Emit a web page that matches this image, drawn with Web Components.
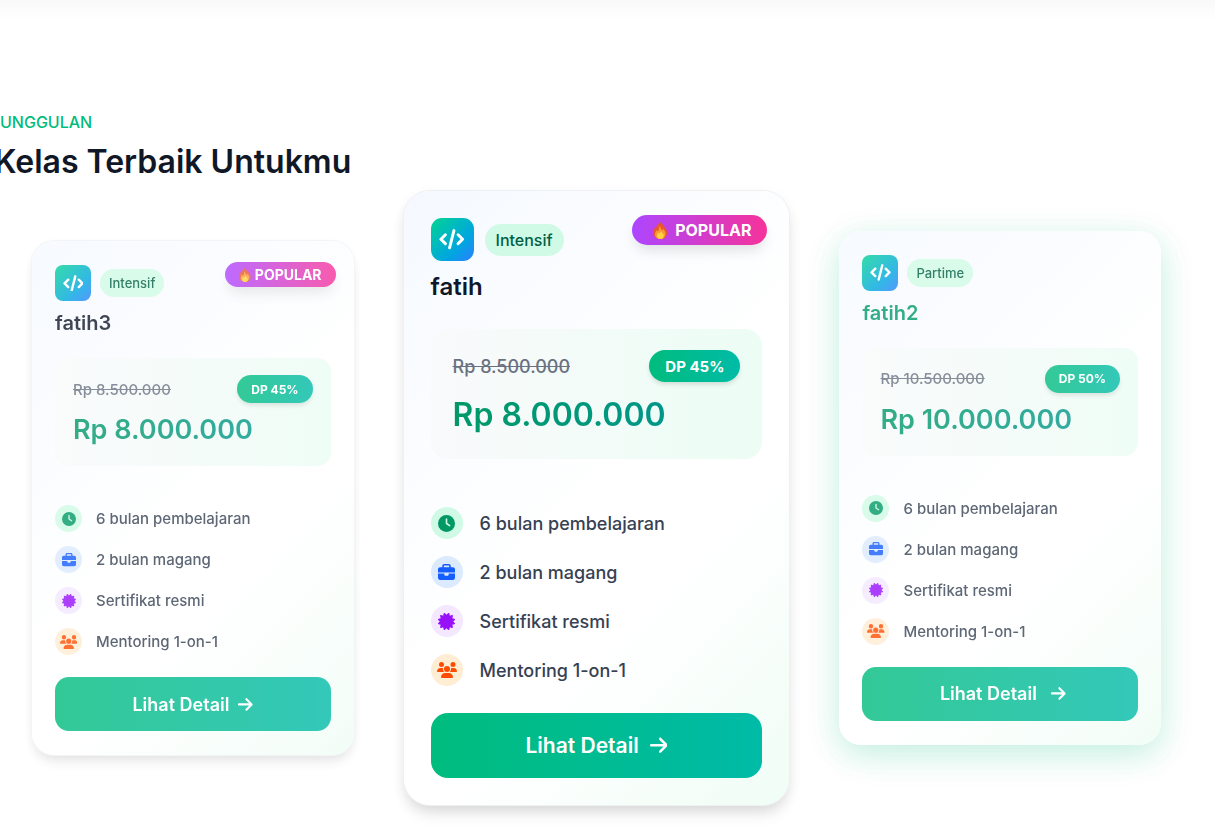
<!DOCTYPE html>
<html lang="id">
<head>
<meta charset="utf-8">
<meta name="viewport" content="width=device-width, initial-scale=1">
<title>Kelas Terbaik Untukmu</title>
<style>
  body { margin: 0; background: #fff; color: #101828; font-family: Inter, "Liberation Sans", sans-serif; overflow-x: hidden; }
</style>
</head>
<body>
<class-section>
  <span slot="eyebrow">UNGGULAN</span>
  <span slot="title">Kelas Terbaik Untukmu</span>
  <class-card popular muted>
    <span slot="type">Intensif</span>
    <span slot="name">fatih3</span>
    <s slot="old">Rp 8.500.000</s>
    <span slot="off">DP 45%</span>
    <span slot="price">Rp 8.000.000</span>
  </class-card>
  <class-card popular featured>
    <span slot="type">Intensif</span>
    <span slot="name">fatih</span>
    <s slot="old">Rp 8.500.000</s>
    <span slot="off">DP 45%</span>
    <span slot="price">Rp 8.000.000</span>
  </class-card>
  <class-card muted active>
    <span slot="type">Partime</span>
    <span slot="name">fatih2</span>
    <s slot="old">Rp 10.500.000</s>
    <span slot="off">DP 50%</span>
    <span slot="price">Rp 10.000.000</span>
  </class-card>
</class-section>

<template id="section-tpl">
  <style>
    :host { display: block; }
    .shade { height: 20px; background: linear-gradient(#f9f9f9, #fff); }
    header { padding-top: 90px; margin-left: -6px; white-space: nowrap; }
    p { margin: 0; padding-left: 6px; font-size: 16px; line-height: 24px; font-weight: 500; color: #00bc7d; }
    h2 { margin: 8px 0 9px; font-size: 32px; line-height: 40px; font-weight: 600; }
    .cards { display: grid; grid-template-columns: 5fr 6fr 5fr; column-gap: 50px; align-items: center; padding: 0 54px 26px 32px; }
  </style>
  <div class="shade"></div>
  <header>
    <p><slot name="eyebrow"></slot></p>
    <h2><slot name="title"></slot></h2>
  </header>
  <div class="cards"><slot></slot></div>
</template>

<template id="card-tpl">
  <style>
    :host {
      --pad: 24px 23px; --icon: 36px; --glyph: 14px; --team: 14px; --pill: 28px; --small: 13px; --off: 12px; --pop: 14px; --old: 15px; --name: 20px; --name-lh: 28px;
      --name-mt: 8px; --box-mt: 21px; --box-pad: 17px 18px 19px; --price: 27px; --price-lh: 34px; --price-mt: 10px;
      --list-mt: 39px; --dot: 27px; --row-gap: 14px; --text: 15px; --btn-mt: 22px; --btn: 54px; --btn-text: 18px;
      --radius: 14px; --gap: 9px; --badge-top: 21px; --badge-right: 18px; --badge: 25px; --chip-x: 9px; --off-x: 14px;
      display: block; position: relative; box-sizing: border-box; padding: var(--pad); border-radius: 22px;
      background: linear-gradient(135deg, #f5f9ff, #fff 50%, #fff 65%, #f0fdf6);
      box-shadow: 0 0 0 1px #f1f2f4, 0 9px 14px -3px #0000001c, 0 3px 14px -3px #00000018;
    }
    :host([featured]) {
      --pad: 27px; --icon: 43px; --glyph: 17px; --team: 16px; --pill: 32px; --small: 16px; --off: 15px; --pop: 16px; --old: 18px; --name: 24px; --name-lh: 32px;
      --name-mt: 10px; --box-mt: 26px; --box-pad: 21px 22px 24px; --price: 32px; --price-lh: 40px; --price-mt: 13px;
      --list-mt: 48px; --dot: 32px; --row-gap: 17px; --text: 18px; --btn-mt: 27px; --btn: 65px; --btn-text: 21px;
      --radius: 17px; --gap: 11px; --badge-top: 24px; --badge-right: 22px; --badge: 30px; --chip-x: 11px; --off-x: 16px;
      border-radius: 26px;
      box-shadow: 0 0 0 1px #eff0f2, 0 11px 16px -3px #0000001c, 0 4px 16px -3px #00000018;
    }
    :host([muted]) { opacity: .8; }
    :host([active]) {
      margin-bottom: 21px;
      box-shadow: 0 9px 34px #00bc7d50;
    }
    .head { display: flex; align-items: center; gap: var(--gap); }
    .logo { display: grid; place-items: center; width: var(--icon); height: var(--icon); border-radius: 8px; background: linear-gradient(135deg, #00d492, #00a6e0 65%, #2b7fff); }
    :host([featured]) .logo { border-radius: 11px; }
    .logo svg { height: calc(var(--glyph) * 1.2); }
    .chip, .off, .badge { display: flex; align-items: center; white-space: nowrap; border-radius: 99px; }
    .chip { height: var(--pill); padding: 0 var(--chip-x); box-sizing: border-box; background: #d0fae5; color: #006045; font-size: var(--small); font-weight: 500; }
    .badge {
      position: absolute; top: var(--badge-top); right: var(--badge-right); height: var(--badge); gap: 4px;
      padding: 0 var(--off-x); background: linear-gradient(90deg, #ad46ff, #f6339a); color: #fff;
      font-size: var(--pop); font-weight: 700; box-shadow: 0 8px 14px -3px #0000001f;
    }
    :host([featured]) .badge { padding-left: 21px; gap: 8px; }
    .badge svg { height: var(--glyph); }
    :host(:not([popular])) .badge { display: none; }
    h3 { margin: var(--name-mt) 0 0; font-size: var(--name); line-height: var(--name-lh); font-weight: 600; }
    :host([active]) h3 { color: #009966; }
    .box { margin-top: var(--box-mt); padding: var(--box-pad); border-radius: var(--radius); background: linear-gradient(90deg, #f9fafb, #ecfdf5); }
    .row { display: flex; justify-content: space-between; align-items: center; height: var(--pill); }
    .old { color: #6a7282; font-size: var(--old); font-weight: 500; }
    .off { height: var(--pill); padding: 0 var(--off-x); background: linear-gradient(90deg, #00bc7d, #00bba7); color: #fff; font-size: var(--off); font-weight: 700; box-shadow: 0 3px 5px -1px #00000026; }
    .price { width: fit-content; margin-top: var(--price-mt); font-size: var(--price); line-height: var(--price-lh); font-weight: 600; color: transparent; background: linear-gradient(90deg, #009966, #009689); background-clip: text; -webkit-background-clip: text; white-space: nowrap; }
    ul { list-style: none; margin: var(--list-mt) 0 0; padding: 0; display: grid; gap: var(--row-gap); color: #364153; font-size: var(--text); font-weight: 500; }
    li { display: flex; align-items: center; gap: var(--row-gap); height: var(--dot); white-space: nowrap; }
    i { display: grid; place-items: center; width: var(--dot); height: var(--dot); border-radius: 50%; }
    i svg { height: var(--glyph); }
    .team svg { height: var(--team); }
    .time { background: #d0fae5; color: #009966; }
    .work { background: #dbeafe; color: #155dfc; }
    .cert { background: #f3e8ff; color: #9810fa; }
    .team { background: #ffedd4; color: #ff4d00; }
    svg { display: block; fill: currentColor; }
    a { display: flex; align-items: center; justify-content: center; gap: var(--gap); height: var(--btn); margin-top: var(--btn-mt); border-radius: var(--radius); background: linear-gradient(90deg, #00bc7d, #00bba7); color: #fff; font-size: var(--btn-text); font-weight: 600; text-decoration: none; }
    a svg { height: calc(var(--glyph) * 1.2); }
    :host([active]) a svg { transform: translateX(5px); }
  </style>
  <div class="badge">
    <svg viewBox="0 0 28 34" aria-hidden="true"><path fill="#e9572b" d="M14 0c2 3 3 4 3 7 2-1 2-3 2-4 4 4 4 7 4 9l2-2c2 4 3 8 3 12 0 8-6 12-13 12S1 30 1 22c0-5 1-9 4-12l1 3c1-6 4-8 8-13z"/><path fill="#fb9a35" d="M13 8c4 4 3 7 5 9l3-3c3 4 5 7 4 11-1 6-5 9-10 9S4 31 4 25c0-4 2-6 3-9l2 3c3-3 4-7 4-11z"/><path fill="#ffd43e" d="M16 17c0 4 3 5 5 8 1 5-1 9-6 9s-7-3-7-7c0-3 2-4 2-6l2 2c3-1 4-3 4-6z"/></svg>
    <span>POPULAR</span>
  </div>
  <div class="head">
    <div class="logo"><svg viewBox="0 0 640 512" aria-hidden="true"><path d="M375 40 265 472M160 144 48 256l112 112M480 144l112 112-112 112" fill="none" stroke="#fff" stroke-width="74" stroke-linecap="round" stroke-linejoin="round"/></svg></div>
    <div class="chip"><slot name="type"></slot></div>
  </div>
  <h3><slot name="name"></slot></h3>
  <div class="box">
    <div class="row"><div class="old"><slot name="old"></slot></div><div class="off"><slot name="off"></slot></div></div>
    <div class="price"><slot name="price"></slot></div>
  </div>
  <ul>
    <li><i class="time"><svg viewBox="0 0 512 512" aria-hidden="true"><path fill-rule="evenodd" d="M256 0a256 256 0 1 1 0 512A256 256 0 1 1 256 0zM232 120V256c0 8 4 15.500 10.700 20l96 64c11 7.400 25.900 4.400 33.300-6.700s4.400-25.900-6.700-33.300L280 243.200V120c0-13.300-10.700-24-24-24s-24 10.700-24 24z"/></svg></i><span>6 bulan pembelajaran</span></li>
    <li><i class="work"><svg viewBox="0 0 512 512" aria-hidden="true"><path d="M184 48H328c4.400 0 8 3.600 8 8V96H176V56c0-4.400 3.600-8 8-8zm-56 8V96H64C28.700 96 0 124.700 0 160v96H512V160c0-35.300-28.700-64-64-64H384V56c0-30.900-25.100-56-56-56H184c-30.900 0-56 25.100-56 56zM512 288H320v32c0 17.700-14.300 32-32 32H224c-17.700 0-32-14.300-32-32V288H0V416c0 35.300 28.700 64 64 64H448c35.300 0 64-28.700 64-64V288z"/></svg></i><span>2 bulan magang</span></li>
    <li><i class="cert"><svg viewBox="0 0 512 512" aria-hidden="true"><path d="M211 7.300C205 1 196-1.400 187.600.8s-14.900 8.900-17.100 17.300L154.700 80.600l-62-17.500c-8.400-2.400-17.400 0-23.500 6.100s-8.500 15.100-6.100 23.500l17.500 62L18.100 170.600c-8.400 2.100-15 8.700-17.300 17.100S1 205 7.300 211l46.200 45L7.300 301C1 307-1.400 316 .8 324.400s8.900 14.900 17.300 17.100l62.500 15.800-17.500 62c-2.400 8.400 0 17.400 6.100 23.500s15.100 8.500 23.500 6.100l62-17.500 15.800 62.500c2.100 8.400 8.700 15 17.100 17.300s17.300-.2 23.400-6.400l45-46.200 45 46.200c6.100 6.200 15 8.700 23.400 6.400s14.900-8.900 17.100-17.300l15.800-62.500 62 17.500c8.400 2.400 17.400 0 23.500-6.100s8.500-15.100 6.100-23.500l-17.500-62 62.500-15.800c8.400-2.100 15-8.700 17.300-17.100s-.2-17.400-6.400-23.400l-46.200-45 46.200-45c6.200-6.100 8.700-15 6.400-23.400s-8.900-14.900-17.300-17.100l-62.500-15.800 17.500-62c2.400-8.400 0-17.400-6.100-23.500s-15.100-8.500-23.500-6.100l-62 17.500L341.400 18.100c-2.100-8.400-8.700-15-17.100-17.300S307 1 301 7.300L256 53.500 211 7.300z"/></svg></i><span>Sertifikat resmi</span></li>
    <li><i class="team"><svg viewBox="0 0 640 512" aria-hidden="true"><path d="M144 0a80 80 0 1 1 0 160A80 80 0 1 1 144 0zM512 0a80 80 0 1 1 0 160A80 80 0 1 1 512 0zM0 298.700C0 239.800 47.800 192 106.700 192h42.700c15.900 0 31 3.500 44.600 9.700c-1.300 7.200-1.900 14.700-1.900 22.300c0 38.200 16.800 72.500 43.300 96H21.300C9.600 320 0 310.400 0 298.700zM405.300 320c26-23.500 42.600-57.800 42.600-96c0-7.600-.7-15-1.900-22.300c13.600-6.300 28.700-9.700 44.600-9.700h42.700C592.200 192 640 239.800 640 298.700c0 11.800-9.600 21.300-21.300 21.300H405.300zM224 224a96 96 0 1 1 192 0 96 96 0 1 1-192 0zM128 485.300C128 411.700 187.700 352 261.300 352H378.700C452.300 352 512 411.700 512 485.300c0 14.700-11.900 26.700-26.700 26.700H154.700c-14.700 0-26.700-11.900-26.700-26.700z"/></svg></i><span>Mentoring 1-on-1</span></li>
  </ul>
  <a href="#detail"><span>Lihat Detail</span><svg viewBox="0 0 448 512" aria-hidden="true"><path d="M438.600 278.600c12.500-12.500 12.500-32.800 0-45.300l-160-160c-12.500-12.500-32.800-12.500-45.300 0s-12.500 32.800 0 45.300L338.800 224 32 224c-17.700 0-32 14.300-32 32s14.300 32 32 32l306.700 0L233.400 393.400c-12.500 12.500-12.500 32.800 0 45.300s32.800 12.500 45.300 0l160-160z"/></svg></a>
</template>

<script>
  const define = (name, templateId) => customElements.define(name, class extends HTMLElement {
    constructor() {
      super();
      this.attachShadow({ mode: 'open' }).append(document.getElementById(templateId).content.cloneNode(true));
    }
  });
  define('class-section', 'section-tpl');
  define('class-card', 'card-tpl');
</script>
</body>
</html>
